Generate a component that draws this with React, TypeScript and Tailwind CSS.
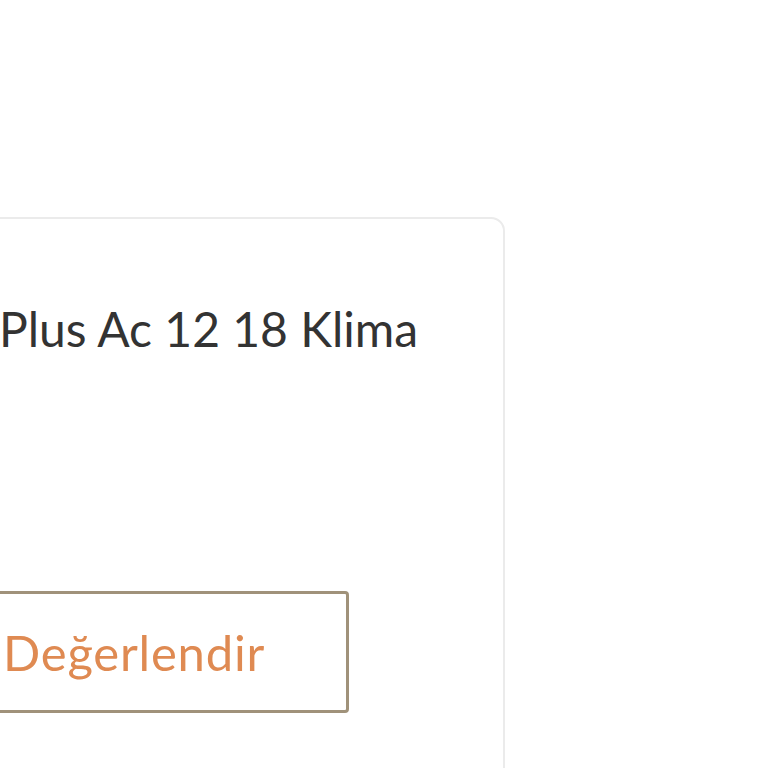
export default function App() {
  return (
    <div className="w-[768px] h-[768px] overflow-hidden bg-white" style={{ fontFamily: "'Source Sans Pro', Lato, 'Open Sans', sans-serif" }}>
      <div className="ml-[-40px] mt-[217px] w-[545px] h-[620px] border-2 border-[#ebebeb] rounded-[14px] bg-white flex flex-col">
        <div className="pl-[37px] pt-[82px] text-[48px] leading-[56px] text-[#333333] whitespace-nowrap">
          Plus Ac 12 18 Klima
        </div>
        <div className="mt-[234px] ml-[-20px] w-[407px] h-[122px] border-[3px] border-[#a0927a] rounded-[4px] flex items-center pl-[58px]">
          <span className="text-[49px] leading-[56px] tracking-[0.8px] text-[#df8a52]">Değerlendir</span>
        </div>
      </div>
    </div>
  );
}
